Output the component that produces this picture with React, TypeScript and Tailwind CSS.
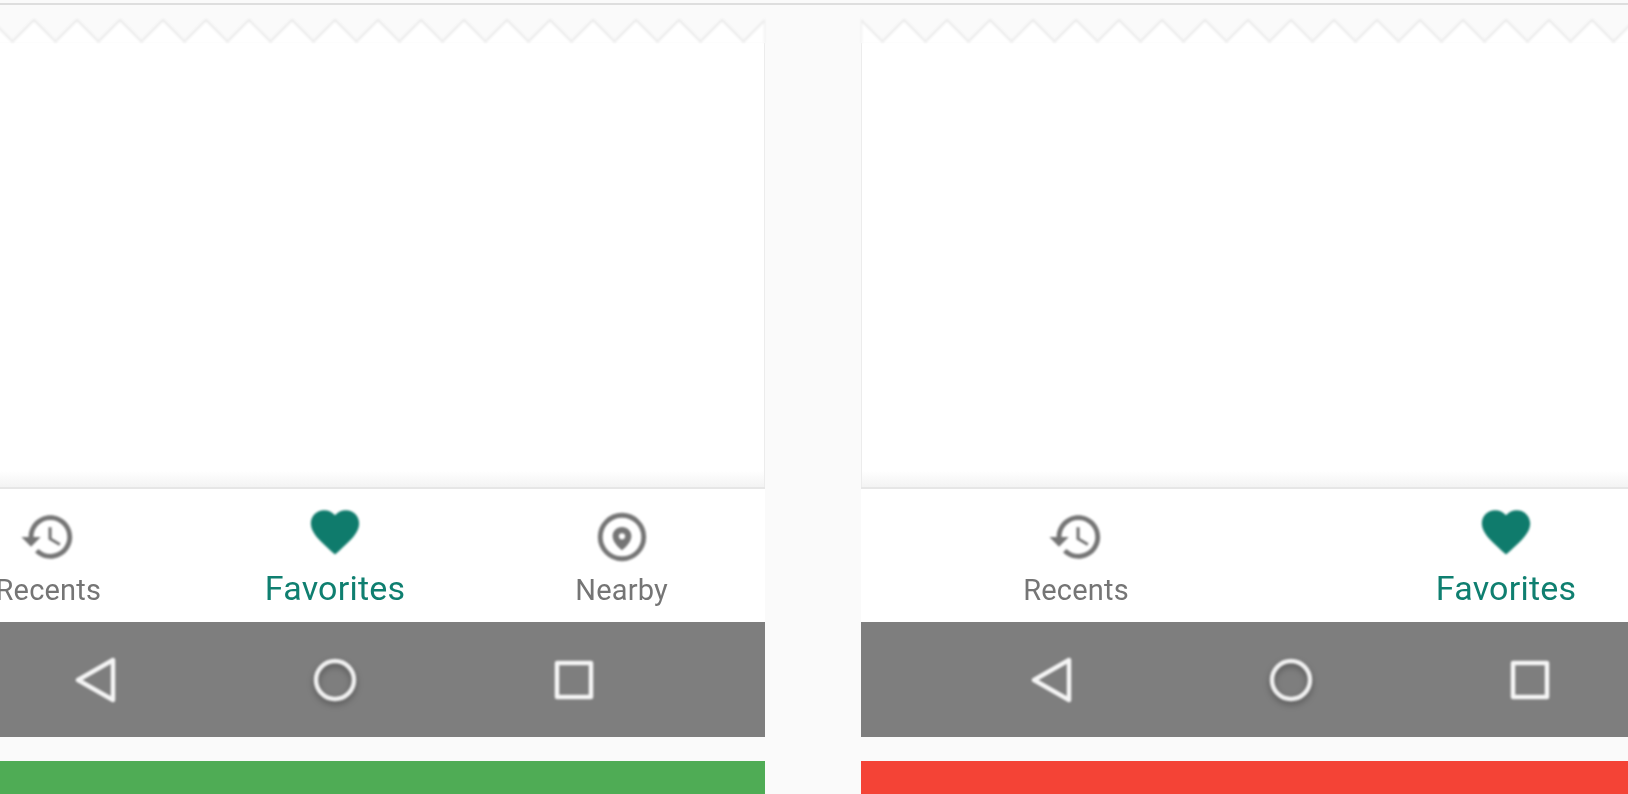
import React from 'react';

const font = { fontFamily: 'Roboto, "Noto Sans", sans-serif' };

// torn paper edge: 20 teeth of 43px, starts and ends on a peak
const zigzagPoints = () => {
  const pts: string[] = [];
  for (let i = 0; i < 20; i++) {
    pts.push(`${i * 43},1`, `${i * 43 + 21.5},22.5`);
  }
  pts.push('860,1');
  return pts.join(' ');
};

const TornEdge = () => (
  <svg width="860" height="24" viewBox="0 0 860 24" className="block shrink-0 blur-[0.8px]">
    <polygon points={`${zigzagPoints()} 860,24 0,24`} fill="#ffffff" />
    <polyline points={zigzagPoints()} fill="none" stroke="#ebebeb" strokeWidth="2.2" />
    <path d="M0.5 1V24M859.5 1V24" fill="none" stroke="#ececec" />
  </svg>
);

const HistoryIcon = () => (
  <svg width="58" height="58" viewBox="0 0 24 24" fill="#757575" className="blur-[1px]">
    <path d="M13 3c-4.97 0-9 4.03-9 9H1l3.89 3.89.07.14L9 12H6c0-3.87 3.13-7 7-7s7 3.13 7 7-3.13 7-7 7c-1.93 0-3.68-.79-4.94-2.06l-1.42 1.42C8.27 19.99 10.51 21 13 21c4.97 0 9-4.03 9-9s-4.03-9-9-9z" />
    <path d="M12.2 8v5l4.4 2.6.6-1-3.7-2.2V8z" />
  </svg>
);

const HeartIcon = () => (
  <svg width="58" height="58" viewBox="0 0 24 24" fill="#0f7b6c" className="blur-[0.8px]">
    <path d="M12 21.35l-1.45-1.32C5.4 15.36 2 12.28 2 8.5 2 5.42 4.42 3 7.5 3c1.74 0 3.41.81 4.5 2.09C13.09 3.81 14.76 3 16.5 3 19.58 3 22 5.42 22 8.5c0 3.78-3.4 6.86-8.55 11.54L12 21.35z" />
  </svg>
);

const PinIcon = () => (
  <svg width="58" height="58" viewBox="0 0 24 24" className="blur-[1px]">
    <circle cx="12" cy="12" r="9" fill="none" stroke="#757575" strokeWidth="2" />
    <path
      fillRule="evenodd"
      fill="#757575"
      d="M12 7.9c-2.2 0-3.9 1.7-3.9 3.8 0 2.9 3.9 5.8 3.9 5.8s3.9-2.9 3.9-5.8c0-2.1-1.7-3.8-3.9-3.8zm0 2.5a1.3 1.3 0 1 1 0 2.6 1.3 1.3 0 0 1 0-2.6z"
    />
  </svg>
);

const Tab = ({ icon, label, active }: { icon: React.ReactNode; label: string; active?: boolean }) => (
  <div className={`flex-1 flex flex-col items-center ${active ? 'pt-[14px]' : 'pt-[19px]'}`}>
    {icon}
    {active ? (
      <span className="mt-[7px] text-[34px] leading-[40px] tracking-[0.2px] text-[#0f7f70] blur-[0.7px]">{label}</span>
    ) : (
      <span className="mt-[7px] text-[29px] leading-[34px] tracking-[0.2px] text-[#757575] blur-[0.7px]">{label}</span>
    )}
  </div>
);

const SystemBar = () => (
  <div className="h-[115px] shrink-0 bg-[#7e7e7e] flex items-center justify-center">
    <div className="w-[239px] flex justify-center">
      <svg width="48" height="48" viewBox="0 0 48 48" className="blur-[1px]">
        <path d="M6 24 L41 4 L41 44 Z" fill="none" stroke="#f5f5f5" strokeWidth="4.5" strokeLinejoin="round" />
      </svg>
    </div>
    <div className="w-[239px] flex justify-center">
      <svg width="48" height="48" viewBox="0 0 48 48" className="drop-shadow-[0_3px_3px_rgba(0,0,0,0.35)]">
        <circle cx="24" cy="24" r="19" fill="none" stroke="#f0f0f0" strokeWidth="4.5" className="blur-[1px]" />
      </svg>
    </div>
    <div className="w-[239px] flex justify-center">
      <svg width="48" height="48" viewBox="0 0 48 48" className="blur-[1px]">
        <rect x="7" y="7" width="34" height="34" fill="none" stroke="#f5f5f5" strokeWidth="4.5" strokeLinejoin="round" />
      </svg>
    </div>
  </div>
);

const Phone = ({ tabs, barClass }: { tabs: React.ReactNode; barClass: string }) => (
  <div className="w-[860px] shrink-0 flex flex-col pt-[14px]">
    <TornEdge />
    <div className="flex-1 bg-white border-x border-[#ececec] flex flex-col justify-end">
      <div className="h-[16px] bg-gradient-to-t from-[#f3f3f3] to-white" />
    </div>
    <div className="h-[135px] shrink-0 bg-white flex border-t-2 border-[#e6e6e6]">
      {tabs}
    </div>
    <SystemBar />
    <div className={`mt-[24px] h-[33px] shrink-0 ${barClass}`} />
  </div>
);

export default function App() {
  return (
    <div className="h-screen bg-[#fafafa] overflow-hidden flex flex-col" style={font}>
      <div className="mt-[3px] h-[2px] shrink-0 bg-[#dedede]" />
      <div className="flex-1 flex gap-[96px] -ml-[95px]">
        <Phone
          barClass="bg-[#4fac55]"
          tabs={
            <>
              <Tab icon={<HistoryIcon />} label="Recents" />
              <Tab icon={<HeartIcon />} label="Favorites" active />
              <Tab icon={<PinIcon />} label="Nearby" />
            </>
          }
        />
        <Phone
          barClass="bg-[#f44336]"
          tabs={
            <>
              <Tab icon={<HistoryIcon />} label="Recents" />
              <Tab icon={<HeartIcon />} label="Favorites" active />
            </>
          }
        />
      </div>
    </div>
  );
}
